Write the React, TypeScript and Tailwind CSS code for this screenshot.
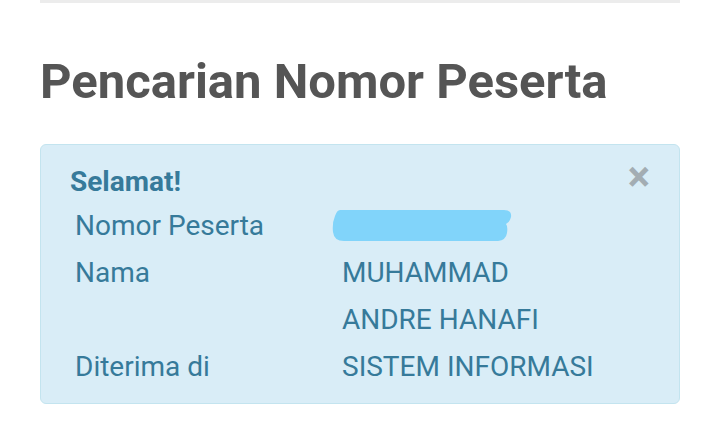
export default function App() {
  return (
    <div className="w-[709px] h-[436px] bg-white overflow-hidden" style={{ fontFamily: "Roboto, 'Liberation Sans', sans-serif" }}>
      <div className="ml-[40px] w-[640px]">
        <div className="h-[3px] bg-[#ececec]" />
        <h1 className="mt-[51px] text-[49px] leading-[56px] font-bold text-[#555555]">
          Pencarian Nomor Peserta
        </h1>
        <div className="mt-[34px] h-[260px] rounded-[6px] border border-[#c3e4ef] bg-[#d9edf7] pl-[29px] pr-[29px] pt-[20px] text-[#367a9a]">
          <div className="flex items-start justify-between">
            <div className="text-[28px] leading-[33px] font-bold">Selamat!</div>
            <button className="mt-[-8px] text-[42px] leading-[40px] font-bold text-[#a3adb3]">×</button>
          </div>
          <table className="mt-[4px] text-[28px] leading-[47px]">
            <tbody>
              <tr>
                <td className="w-[272px] pl-[5px] align-top">Nomor Peserta</td>
                <td className="align-top">
                  <svg width="180" height="34" viewBox="0 0 180 34" className="block ml-[-10px] mt-[6px]">
                    <path
                      d="M8 2 H172 Q180 2 179 9 Q178 14 174 16 Q176 18 175 25 Q174 32 166 33 H12 Q2 33 1 24 Q0 15 3 8 Q5 2 8 2 Z"
                      fill="#81d4fa"
                    />
                  </svg>
                </td>
              </tr>
              <tr>
                <td className="pl-[5px] align-top">Nama</td>
                <td className="align-top">
                  MUHAMMAD
                  <br />
                  ANDRE HANAFI
                </td>
              </tr>
              <tr>
                <td className="pl-[5px] align-top">Diterima di</td>
                <td className="align-top">SISTEM INFORMASI</td>
              </tr>
            </tbody>
          </table>
        </div>
      </div>
    </div>
  );
}
